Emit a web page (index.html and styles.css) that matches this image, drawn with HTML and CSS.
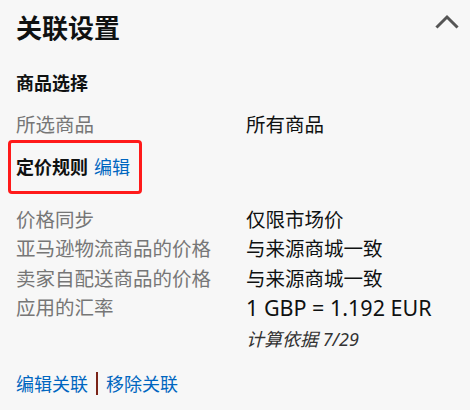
FILE: index.html
```html
<!DOCTYPE html>
<html lang="zh-CN">
<head>
<meta charset="utf-8">
<title>关联设置</title>
<link rel="stylesheet" href="styles.css">
</head>
<body>
<section class="panel">
  <header class="panel-head">
    <h1 class="title">关联设置</h1>
    <svg class="chevron" width="24" height="16" viewBox="0 0 24 16" aria-hidden="true">
      <path d="M2.5 13.5 L12 4 L21.5 13.5" fill="none" stroke="#555" stroke-width="3" stroke-linecap="square"/>
    </svg>
  </header>

  <h2 class="section">商品选择</h2>
  <div class="grid">
    <div class="label">所选商品</div>
    <div class="value">所有商品</div>
  </div>

  <h2 class="section boxed">定价规则 <a class="link" href="#">编辑</a></h2>
  <div class="grid rules">
    <div class="label">价格同步</div>
    <div class="value">仅限市场价</div>
    <div class="label">亚马逊物流商品的价格</div>
    <div class="value">与来源商城一致</div>
    <div class="label">卖家自配送商品的价格</div>
    <div class="value">与来源商城一致</div>
    <div class="label">应用的汇率</div>
    <div class="value"><span class="latin">1 GBP = 1.192 EUR</span><div class="note">计算依据 7/29</div></div>
  </div>

  <nav class="actions">
    <a class="link" href="#">编辑关联</a>
    <span class="sep"></span>
    <a class="link" href="#">移除关联</a>
  </nav>
</section>
</body>
</html>
```
FILE: styles.css
```css
html, body {
  margin: 0;
  padding: 0;
  background: #f7f7f7;
}
body {
  font-family: "Noto Sans", "Noto Sans CJK SC", sans-serif;
  color: #0f1111;
  width: 470px;
  height: 410px;
  overflow: hidden;
}
.panel {
  padding: 0 16px;
}
.panel-head {
  display: flex;
  align-items: center;
  justify-content: space-between;
  height: 56px;
}
.title {
  margin: 0;
  font-size: 26px;
  font-weight: 700;
  line-height: 56px;
}
.chevron {
  margin-right: -5px;
  margin-top: -15px;
}
.section {
  margin: 0;
  font-size: 18px;
  font-weight: 700;
  line-height: 30px;
}
.section:first-of-type {
  margin-top: 12px;
}
.grid {
  display: grid;
  grid-template-columns: 230px 1fr;
  font-size: 19.5px;
  line-height: 29.5px;
}
.grid:first-of-type {
  margin-top: 12px;
}
.label {
  color: #767676;
}
.value {
  color: #0f1111;
}
.latin {
  font-size: 21.5px;
}
.note {
  font-size: 18px;
  font-style: italic;
  font-weight: 400;
  line-height: 30px;
  color: #333;
}
.boxed {
  display: flex;
  align-items: center;
  gap: 6px;
  width: fit-content;
  margin: 0 0 0 -8px;
  padding: 9px 9px 9px 5px;
  border: 3px solid #ff1a1a;
  border-radius: 4px;
}
.boxed .link {
  font-weight: 400;
}
.rules {
  margin-top: 11px;
}
.link {
  color: #0066c0;
  text-decoration: none;
  font-size: 18px;
}
.actions {
  display: flex;
  align-items: center;
  gap: 8px;
  margin-top: 15px;
  line-height: 30px;
}
.sep {
  width: 2px;
  height: 23px;
  background: #7b2418;
}
```
